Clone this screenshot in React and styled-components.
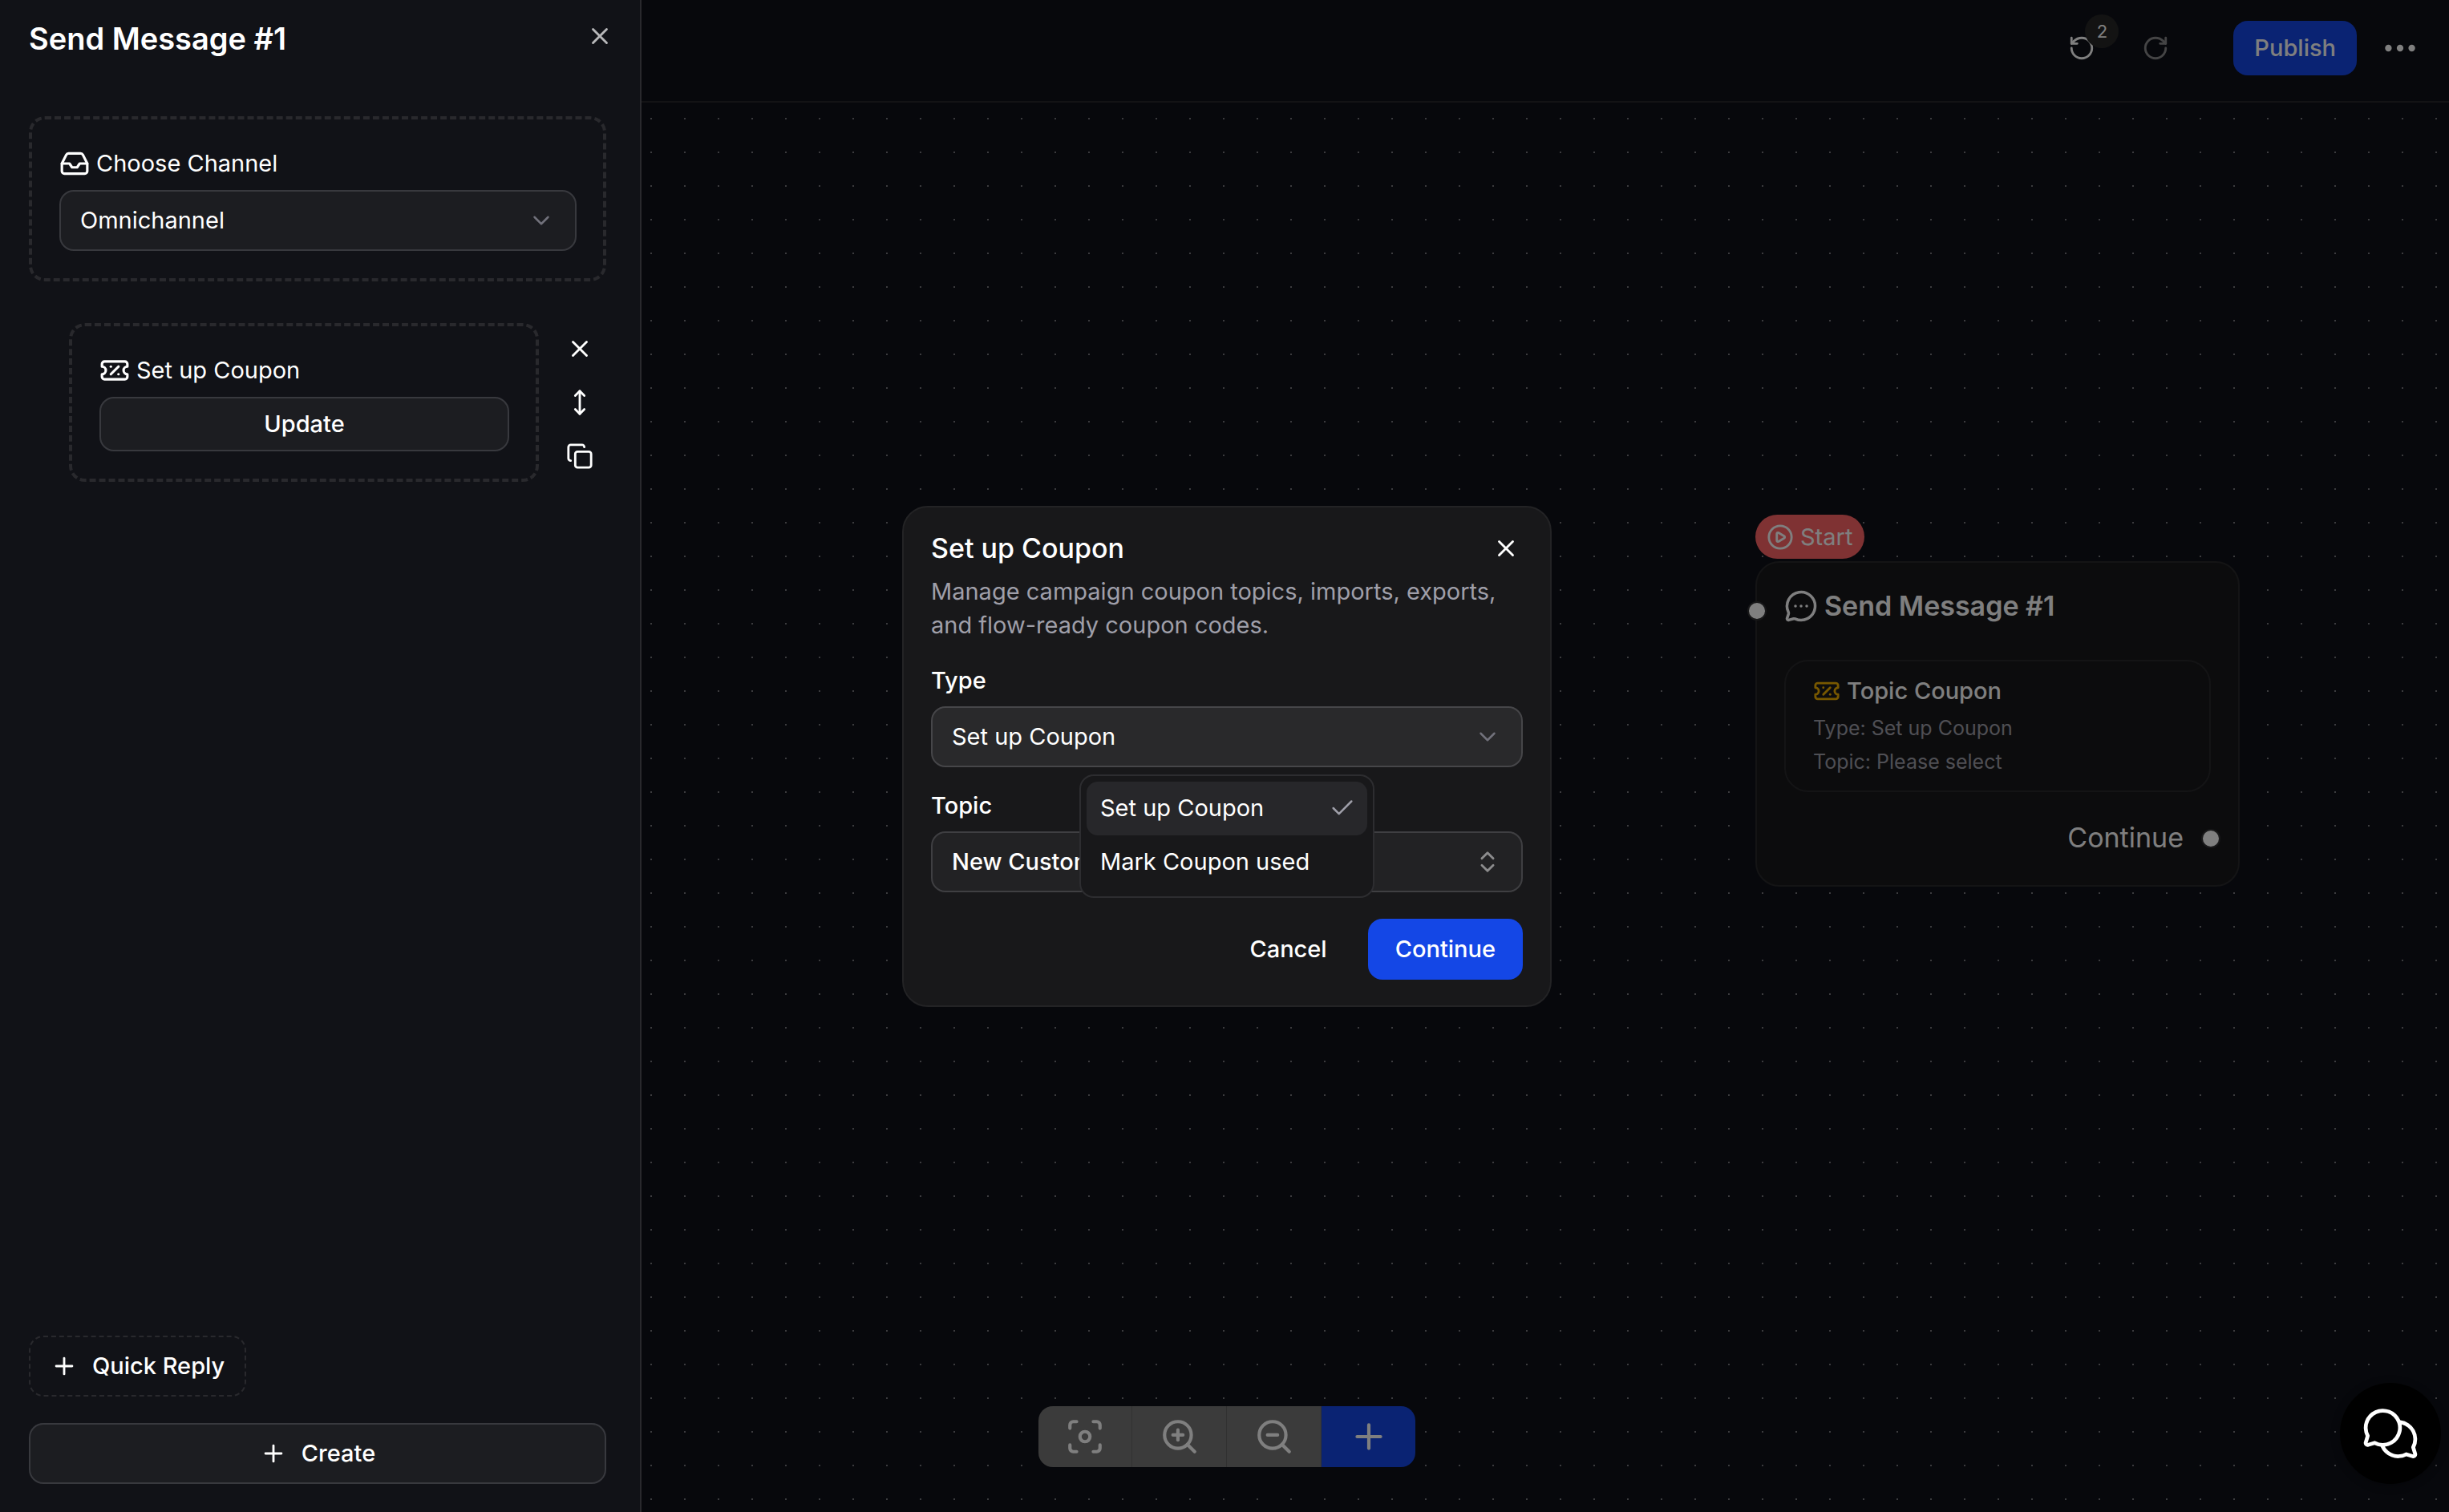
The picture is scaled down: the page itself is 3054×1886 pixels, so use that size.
import React, { useState } from 'react';
import styled, { createGlobalStyle } from 'styled-components';
import {
  Check,
  ChevronDown,
  ChevronsUpDown,
  CirclePlay,
  Copy,
  Ellipsis,
  Focus,
  Inbox,
  MessageCircleMore,
  MoveVertical,
  Plus,
  RotateCcw,
  RotateCw,
  TicketPercent,
  X,
  ZoomIn,
  ZoomOut
} from 'lucide-react';
import { PiChatsCircle } from 'react-icons/pi';

const GlobalStyle = createGlobalStyle`
  * {
    box-sizing: border-box;
    margin: 0;
    padding: 0;
  }

  body {
    background: #111217;
    color: #fff;
    font-family: Inter, 'Liberation Sans', sans-serif;
    font-size: 29px;
    line-height: 42px;
    overflow: hidden;
  }

  button,
  select {
    font: inherit;
    color: inherit;
    cursor: pointer;
  }

  svg {
    display: block;
    flex-shrink: 0;
  }
`;

const Page = styled.div`
  display: flex;
  min-height: 100vh;
`;

// Sidebar
const Sidebar = styled.aside`
  position: relative;
  z-index: 20;
  display: flex;
  flex-direction: column;
  flex: 0 0 800px;
  background: #111217;
  border-right: 2px solid #29292d;
`;

const SidebarHeader = styled.header`
  display: flex;
  align-items: flex-start;
  justify-content: space-between;
  padding: 20px 33px 0 36px;
`;

const SidebarTitle = styled.h1`
  font-size: 38px;
  font-weight: 600;
  line-height: 56px;
`;

const SidebarBody = styled.div`
  display: flex;
  flex-direction: column;
  flex: 1;
  gap: 52px;
  padding: 69px 42px 0 36px;
`;

const SidebarFooter = styled.footer`
  display: flex;
  flex-direction: column;
  align-items: flex-start;
  gap: 33px;
  padding: 0 42px 35px 36px;
`;

const DashedCard = styled.section`
  display: flex;
  flex-direction: column;
  flex: ${({ $grow }) => ($grow ? '1' : 'none')};
  gap: 12px;
  padding: 34px 33px 34px 34px;
  border: 4px dashed #29292d;
  border-radius: 20px;
`;

const CardLabel = styled.label`
  display: flex;
  align-items: center;
  gap: 8px;
`;

const CardHeading = styled.h2`
  display: flex;
  align-items: center;
  gap: 8px;
  font-size: 29px;
  font-weight: 400;
`;

const StepRow = styled.div`
  display: flex;
  align-items: center;
  gap: 18px;
  padding-left: 50px;
`;

const StepActions = styled.div`
  display: flex;
  flex-direction: column;
  margin: -2px 0;
`;

const IconButton = styled.button`
  position: relative;
  display: flex;
  align-items: center;
  justify-content: center;
  width: ${({ $width }) => $width || 34}px;
  height: ${({ $height }) => $height || 67}px;
  border: none;
  background: none;
  color: ${({ $color }) => $color || '#fff'};
`;

const SelectBox = styled.div`
  position: relative;
  color: ${({ $iconColor }) => $iconColor || '#71717b'};

  > svg {
    position: absolute;
    top: 21px;
    right: 27px;
    pointer-events: none;
  }
`;

const Select = styled.select`
  display: block;
  width: 100%;
  height: 76px;
  padding: 0 72px 0 24px;
  border: 2px solid ${({ $border }) => $border || '#38393e'};
  border-radius: 18px;
  background: ${({ $bg }) => $bg || '#1c1d21'};
  color: #fff;
  font-weight: ${({ $weight }) => $weight || 400};
  appearance: none;
`;

const Button = styled.button`
  display: flex;
  align-items: center;
  justify-content: center;
  gap: 18px;
  height: 76px;
  padding: 0 34px;
  border: none;
  border-radius: 18px;
  background: none;
  font-weight: 500;
`;

const OutlineButton = styled(Button)`
  width: 100%;
  height: ${({ $small }) => ($small ? 68 : 76)}px;
  border: 2px solid #38393e;
  background: #1c1d21;
`;

const DashedButton = styled(Button)`
  padding: 0 25px;
  border: 2px dashed #29292d;
`;

const PrimaryButton = styled(Button)`
  background: #1447e6;
`;

// Flow area
const Main = styled.main`
  display: flex;
  flex-direction: column;
  flex: 1;
  min-width: 0;
  background: #0f1119;
`;

const TopBar = styled.header`
  display: flex;
  align-items: flex-start;
  justify-content: flex-end;
  height: 128px;
  padding: 26px 36px 0;
  border-bottom: 2px solid #26272b;
`;

const PublishButton = styled(PrimaryButton)`
  height: 68px;
  margin: 0 29px 0 51px;
  padding: 0 26px;
`;

const CountBadge = styled.span`
  position: absolute;
  top: -8px;
  right: 0;
  width: 42px;
  height: 42px;
  border-radius: 50%;
  background: #262626;
  font-size: 22px;
  text-align: center;
`;

const Canvas = styled.div`
  position: relative;
  flex: 1;
`;

const DotGrid = styled.svg`
  width: 100%;
  height: 100%;
  position: absolute;
  inset: 0;
`;

const FlowNode = styled.article`
  position: absolute;
  top: 514px;
  left: 1389px;
  width: 604px;
`;

const StartBadge = styled.div`
  display: inline-flex;
  align-items: center;
  gap: 8px;
  height: 55px;
  padding: 0 15px 0 14px;
  border-radius: 28px;
  background: #ff6467;
`;

const NodeCard = styled.div`
  position: relative;
  display: flex;
  flex-direction: column;
  margin-top: 2px;
  padding: 33px 34px 38px;
  border: 2px solid #29292b;
  border-radius: 30px;
  background: #18181b;
`;

const NodeTitle = styled.h2`
  display: flex;
  align-items: center;
  gap: 8px;
  font-size: 34px;
  font-weight: 600;
`;

const NodeContent = styled.div`
  margin: 46px 0 36px;
  padding: 16px 34px 15px;
  border: 2px solid #29292b;
  border-radius: 30px;
  color: #9f9fa9;
  font-size: 25px;
`;

const NodeContentTitle = styled.h3`
  display: flex;
  align-items: center;
  gap: 8px;
  margin-bottom: 4px;
  color: #fff;
  font-size: 29px;
  font-weight: 500;

  svg {
    color: #f0b100;
  }
`;

const NodeOutput = styled.div`
  position: relative;
  padding-right: 34px;
  font-size: 34px;
  text-align: right;
`;

const Handle = styled.span`
  position: absolute;
  top: ${({ $top }) => $top}px;
  ${({ $side }) => $side}: -12px;
  width: 24px;
  height: 24px;
  border: 2px solid #303033;
  border-radius: 50%;
  background: #fff;
`;

const ToolbarDock = styled.div`
  position: fixed;
  right: 0;
  bottom: 56px;
  left: 6px;
  display: flex;
  justify-content: center;
`;

const Toolbar = styled.div`
  display: flex;
  border-radius: 18px;
  overflow: hidden;
`;

const ToolButton = styled.button`
  display: flex;
  align-items: center;
  justify-content: center;
  width: 118px;
  height: 76px;
  border: none;
  border-right: ${({ $primary }) => ($primary ? 'none' : '1px solid #626262')};
  background: ${({ $primary }) => ($primary ? '#1447e6' : '#767676')};

  &:first-child,
  &:last-child {
    width: 117px;
  }
`;

// Dialog
const Overlay = styled.div`
  position: fixed;
  inset: 0;
  z-index: 10;
  background: rgba(0, 0, 0, 0.5);
`;

const DialogLayer = styled.div`
  position: fixed;
  inset: 0 0 0 6px;
  z-index: 30;
  display: flex;
  align-items: center;
  justify-content: center;
  pointer-events: none;
`;

const Dialog = styled.div`
  width: 810px;
  padding: 34px 34px 32px;
  border: 2px solid #232325;
  border-radius: 32px;
  background: #18181a;
  pointer-events: auto;
`;

const DialogHeader = styled.div`
  display: flex;
  align-items: center;
  justify-content: space-between;
  padding-right: 4px;
`;

const DialogTitle = styled.h2`
  font-size: 34px;
  font-weight: 500;
  line-height: 34px;
`;

const DialogText = styled.p`
  margin-top: 16px;
  color: #9f9fa9;
`;

const Fields = styled.div`
  display: flex;
  flex-direction: column;
  gap: 27px;
  margin-top: 27px;
`;

const Field = styled.div`
  display: flex;
  flex-direction: column;
  gap: 11px;
`;

const FieldLabel = styled.label`
  font-weight: 500;
`;

const Menu = styled.ul`
  position: absolute;
  top: 85px;
  left: 50%;
  z-index: 1;
  width: 368px;
  padding: 7px 7px 9px;
  border: 2px solid #2d2d30;
  border-radius: 18px;
  background: #18181a;
  color: #fff;
  list-style: none;
  transform: translateX(-50%);
`;

const MenuItem = styled.li`
  display: flex;
  align-items: center;
  justify-content: space-between;
  height: 67px;
  padding: 0 14px 0 17px;
  border-radius: 14px;
  background: ${({ $active }) => ($active ? '#27272a' : 'none')};
  cursor: pointer;

  svg {
    color: #9f9fa9;
  }
`;

const DialogActions = styled.div`
  display: flex;
  justify-content: flex-end;
  gap: 17px;
  margin-top: 33px;
`;

const ChatButton = styled.button`
  position: fixed;
  right: 10px;
  bottom: 35px;
  z-index: 40;
  display: flex;
  align-items: center;
  justify-content: center;
  width: 126px;
  height: 126px;
  border: none;
  border-radius: 50%;
  background: #000;
  box-shadow: 0 2px 12px rgba(0, 0, 0, 0.3);
`;

const couponTypes = ['Set up Coupon', 'Mark Coupon used'];

const App = () => {
  const [type, setType] = useState(couponTypes[0]);

  return (
    <>
      <GlobalStyle />
      <Page>
        <Sidebar>
          <SidebarHeader>
            <SidebarTitle>Send Message #1</SidebarTitle>
            <IconButton aria-label="Close panel" $height={50} $color="#b8b8ba">
              <X size={34} />
            </IconButton>
          </SidebarHeader>

          <SidebarBody>
            <DashedCard>
              <CardLabel htmlFor="channel">
                <Inbox size={38} />
                Choose Channel
              </CardLabel>
              <SelectBox>
                <Select id="channel">
                  <option>Omnichannel</option>
                </Select>
                <ChevronDown size={34} strokeWidth={1.75} />
              </SelectBox>
            </DashedCard>

            <StepRow>
              <DashedCard $grow>
                <CardHeading>
                  <TicketPercent size={38} />
                  Set up Coupon
                </CardHeading>
                <OutlineButton $small>Update</OutlineButton>
              </DashedCard>
              <StepActions>
                <IconButton aria-label="Remove step" $width={66}>
                  <X size={34} />
                </IconButton>
                <IconButton aria-label="Move step" $width={66}>
                  <MoveVertical size={34} />
                </IconButton>
                <IconButton aria-label="Duplicate step" $width={66}>
                  <Copy size={34} />
                </IconButton>
              </StepActions>
            </StepRow>
          </SidebarBody>

          <SidebarFooter>
            <DashedButton>
              <Plus size={34} />
              Quick Reply
            </DashedButton>
            <OutlineButton>
              <Plus size={34} />
              Create
            </OutlineButton>
          </SidebarFooter>
        </Sidebar>

        <Main>
          <TopBar>
            <IconButton aria-label="Undo" $width={92}>
              <RotateCcw size={34} />
              <CountBadge>2</CountBadge>
            </IconButton>
            <IconButton aria-label="Redo" $width={92} $color="#89898b">
              <RotateCw size={34} />
            </IconButton>
            <PublishButton>Publish</PublishButton>
            <IconButton aria-label="More" $width={50}>
              <Ellipsis size={50} />
            </IconButton>
          </TopBar>

          <Canvas>
            <DotGrid aria-hidden="true">
              <defs>
                <pattern id="dots" width="42" height="42" patternUnits="userSpaceOnUse">
                  <rect x="11" y="19" width="2" height="2" fill="#77777c" />
                </pattern>
              </defs>
              <rect width="100%" height="100%" fill="url(#dots)" />
            </DotGrid>

            <FlowNode>
              <StartBadge>
                <CirclePlay size={34} />
                Start
              </StartBadge>
              <NodeCard>
                <Handle $side="left" $top={48} />
                <NodeTitle>
                  <MessageCircleMore size={42} />
                  Send Message #1
                </NodeTitle>
                <NodeContent>
                  <NodeContentTitle>
                    <TicketPercent size={34} />
                    Topic Coupon
                  </NodeContentTitle>
                  <p>Type: Set up Coupon</p>
                  <p>Topic: Please select</p>
                </NodeContent>
                <NodeOutput>
                  Continue
                  <Handle $side="right" $top={10} />
                </NodeOutput>
              </NodeCard>
            </FlowNode>
          </Canvas>

          <ToolbarDock>
            <Toolbar>
              <ToolButton aria-label="Fit view">
                <Focus size={50} />
              </ToolButton>
              <ToolButton aria-label="Zoom in">
                <ZoomIn size={50} />
              </ToolButton>
              <ToolButton aria-label="Zoom out">
                <ZoomOut size={50} />
              </ToolButton>
              <ToolButton aria-label="Add node" $primary>
                <Plus size={50} />
              </ToolButton>
            </Toolbar>
          </ToolbarDock>
        </Main>
      </Page>

      <Overlay />
      <DialogLayer>
        <Dialog role="dialog" aria-labelledby="dialog-title">
          <DialogHeader>
            <DialogTitle id="dialog-title">Set up Coupon</DialogTitle>
            <IconButton aria-label="Close dialog" $height={34}>
              <X size={34} />
            </IconButton>
          </DialogHeader>
          <DialogText>
            Manage campaign coupon topics, imports, exports, and flow-ready coupon codes.
          </DialogText>

          <Fields>
            <Field>
              <FieldLabel htmlFor="type">Type</FieldLabel>
              <SelectBox>
                <Select
                  id="type"
                  $bg="#29292b"
                  $border="#464649"
                  value={type}
                  onChange={(e) => setType(e.target.value)}
                >
                  {couponTypes.map((name) => (
                    <option key={name}>{name}</option>
                  ))}
                </Select>
                <ChevronDown size={34} strokeWidth={1.75} />
                <Menu role="listbox" aria-label="Type">
                  {couponTypes.map((name) => (
                    <MenuItem
                      key={name}
                      role="option"
                      aria-selected={name === type}
                      $active={name === type}
                      onClick={() => setType(name)}
                    >
                      {name}
                      {name === type && <Check size={34} strokeWidth={1.75} />}
                    </MenuItem>
                  ))}
                </Menu>
              </SelectBox>
            </Field>

            <Field>
              <FieldLabel htmlFor="topic">Topic</FieldLabel>
              <SelectBox $iconColor="#8c8c8d">
                <Select id="topic" $bg="#222224" $border="#3f3f42" $weight={500}>
                  <option>New Customer</option>
                </Select>
                <ChevronsUpDown size={34} />
              </SelectBox>
            </Field>
          </Fields>

          <DialogActions>
            <Button>Cancel</Button>
            <PrimaryButton>Continue</PrimaryButton>
          </DialogActions>
        </Dialog>
      </DialogLayer>

      <ChatButton aria-label="Open chat">
        <PiChatsCircle size={76} />
      </ChatButton>
    </>
  );
};

export default App;
